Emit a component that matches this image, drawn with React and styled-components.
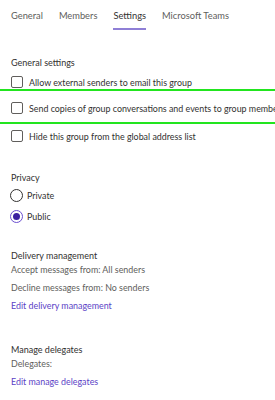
import styled, { createGlobalStyle } from "styled-components";

const GlobalStyle = createGlobalStyle`
  html, body {
    margin: 0;
    padding: 0;
    background: #ffffff;
    overflow: hidden;
  }
  body {
    font-family: Lato, "Open Sans", sans-serif;
    color: #323130;
  }
`;

const tabs = ["General", "Members", "Settings", "Microsoft Teams"];

function App() {
  return (
    <>
      <GlobalStyle />
      <Page>
        <Tabs>
          {tabs.map((t) => (
            <Tab key={t} active={t === "Settings"}>
              {t}
            </Tab>
          ))}
        </Tabs>

        <Section top={26}>
          <Heading>General settings</Heading>
          <CheckRow top={5}>
            <Box />
            <RowText>Allow external senders to email this group</RowText>
          </CheckRow>
          <Highlight>
            <CheckRow>
              <Box />
              <RowText>
                Send copies of group conversations and events to group members
              </RowText>
            </CheckRow>
          </Highlight>
          <CheckRow top={5}>
            <Box />
            <RowText>Hide this group from the global address list</RowText>
          </CheckRow>
        </Section>

        <Section top={28}>
          <Heading>Privacy</Heading>
          <RadioRow>
            <Radio />
            <RowText>Private</RowText>
          </RadioRow>
          <RadioRow>
            <Radio checked />
            <RowText>Public</RowText>
          </RadioRow>
        </Section>

        <Section top={22}>
          <Heading>Delivery management</Heading>
          <Details>
            <Info>Accept messages from: All senders</Info>
            <Info>Decline messages from: No senders</Info>
            <Link>Edit delivery management</Link>
          </Details>
        </Section>

        <Section top={30}>
          <Heading>Manage delegates</Heading>
          <Details>
            <Info>Delegates:</Info>
            <Link>Edit manage delegates</Link>
          </Details>
        </Section>
      </Page>
    </>
  );
}

const Page = styled.div`
  width: 275px;
  height: 400px;
  overflow: hidden;
  white-space: nowrap;
  font-size: 8.9px;
`;

const Tabs = styled.div`
  display: flex;
  gap: 16px;
  padding: 8px 0 0 11px;
`;

const Tab = styled.div`
  font-size: 9.3px;
  line-height: 16px;
  color: ${(p) => (p.active ? "#323130" : "#605e5c")};
  padding-bottom: 4px;
  border-bottom: 2px solid ${(p) => (p.active ? "#8f7fd6" : "transparent")};
`;

const Section = styled.div`
  display: flex;
  flex-direction: column;
  margin-top: ${(p) => p.top}px;
`;

const Heading = styled.div`
  padding-left: 11px;
  font-size: 9px;
  line-height: 14px;
  color: #323130;
`;

const CheckRow = styled.div`
  display: flex;
  align-items: center;
  gap: 6px;
  padding-left: 11px;
  height: 14px;
  margin-top: ${(p) => p.top || 0}px;
`;

const Highlight = styled.div`
  border-top: 2px solid #22e51f;
  border-bottom: 2px solid #22e51f;
  padding: 10px 0 7px;
`;

const Box = styled.span`
  flex: none;
  box-sizing: border-box;
  width: 12px;
  height: 12px;
  border: 1px solid #605e5c;
  border-radius: 2px;
`;

const RowText = styled.span`
  font-size: 8.9px;
  color: #323130;
`;

const RadioRow = styled.div`
  display: flex;
  align-items: center;
  gap: 4px;
  padding-left: 10px;
  height: 21px;
  &:first-of-type {
    margin-top: 1px;
  }
`;

const Radio = styled.span`
  flex: none;
  box-sizing: border-box;
  width: 13px;
  height: 13px;
  border-radius: 50%;
  border: 1px solid ${(p) => (p.checked ? "#6b4fd0" : "#323130")};
  display: flex;
  align-items: center;
  justify-content: center;

  &::after {
    content: "";
    display: ${(p) => (p.checked ? "block" : "none")};
    width: 7px;
    height: 7px;
    border-radius: 50%;
    background: #3b1fa0;
  }
`;

const Details = styled.div`
  display: flex;
  flex-direction: column;
  gap: 4px;
`;

const Info = styled.div`
  padding-left: 11px;
  font-size: 8.9px;
  line-height: 14px;
  color: #605e5c;
`;

const Link = styled.a`
  padding-left: 11px;
  font-size: 8.9px;
  line-height: 14px;
  color: #5b3fc6;
  cursor: pointer;
`;

export default App;
